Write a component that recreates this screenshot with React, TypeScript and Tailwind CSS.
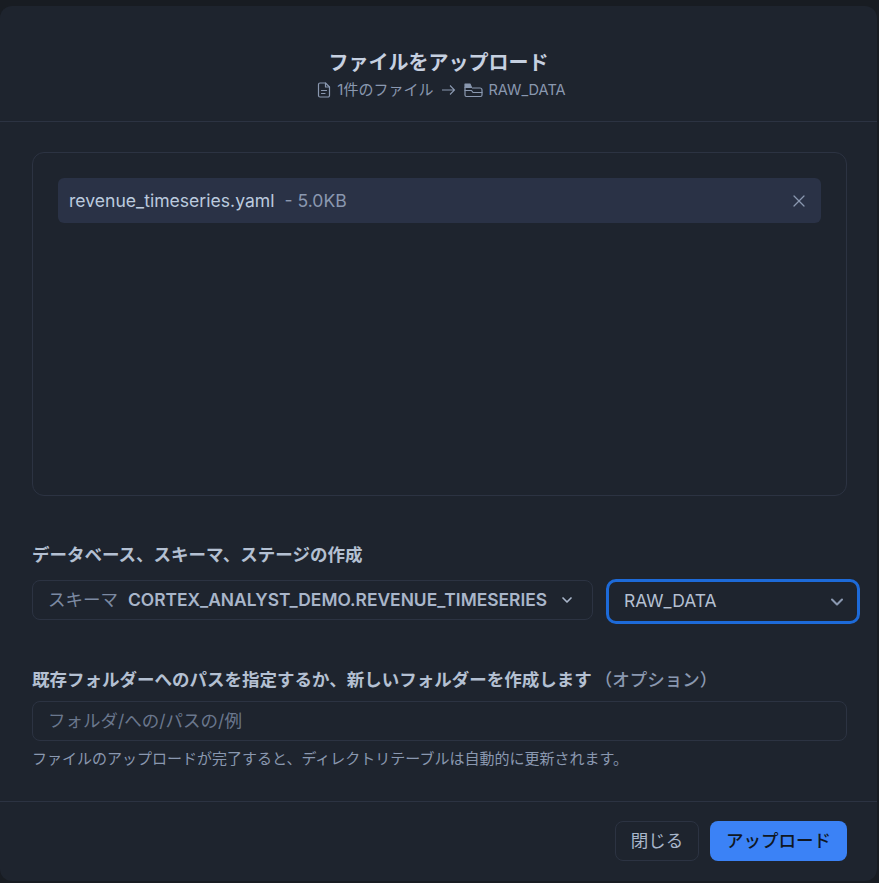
import { ChevronDown, X } from "lucide-react";

const font = "font-['Inter','Noto_Sans_CJK_JP',sans-serif]";

function FileIcon() {
    return (
        <svg width="14" height="16" viewBox="0 0 14 16" fill="none" stroke="currentColor" strokeWidth="1.2" strokeLinecap="round" strokeLinejoin="round">
            <path d="M8.5 1H3a1.5 1.5 0 0 0-1.5 1.5v11A1.5 1.5 0 0 0 3 15h8a1.5 1.5 0 0 0 1.5-1.5V5z" />
            <path d="M8.5 1v4h4" />
            <path d="M4.5 8.5h5M4.5 11.5h3.5" />
        </svg>
    );
}

function StageIcon() {
    return (
        <svg width="19" height="15" viewBox="0 0 19 15" fill="none" stroke="currentColor" strokeWidth="1.2" strokeLinecap="round" strokeLinejoin="round">
            <path d="M1 1h5l1.5 3.5H1z" fill="currentColor" />
            <path d="M1 4.5v7.5a1.5 1.5 0 0 0 1.5 1.5h14a1.5 1.5 0 0 0 1.5-1.5V7a2 2 0 0 0-2-2H8.5" />
            <path d="M1 7.5h6.5L9 9.5h9" />
        </svg>
    );
}

export default function App() {
    return (
        <div className={`h-[883px] w-[879px] overflow-hidden bg-[#181c22] pt-1.5 ${font}`}>
            <div className="flex h-[875px] w-[877px] flex-col rounded-xl bg-[#1e242e]">
                <header className="flex h-[116px] shrink-0 flex-col items-center border-b border-[#2c3342] pt-[43px]">
                    <h2 className="text-[20px] leading-7 font-semibold text-[#c6d0e0]">ファイルをアップロード</h2>
                    <div className="mt-[3px] flex items-center pl-[6px] text-[15px] leading-5 text-[#8a98b0]">
                        <FileIcon />
                        <span className="ml-[6px]">1件のファイル</span>
                        <svg className="mx-2" width="15" height="12" viewBox="0 0 15 12" fill="none" stroke="currentColor" strokeWidth="1.1">
                            <path d="M1 6h12.5M9 1.5 13.5 6 9 10.5" />
                        </svg>
                        <StageIcon />
                        <span className="ml-[5px] text-[14.6px]">RAW_DATA</span>
                    </div>
                </header>

                <div className="flex min-h-0 flex-1 flex-col pt-[30px] pr-[30px] pl-8">
                    <div className="h-[344px] rounded-xl border border-[#2c3342] p-[25px]">
                        <div className="flex h-[45px] items-center justify-between rounded-md bg-[#2a3246] pr-3 pl-[11px]">
                            <div className="pt-px text-[17.6px]">
                                <span className="text-[#bccbdf]">revenue_timeseries.yaml</span>
                                <span className="ml-2.5 text-[#8a98b0]">- 5.0KB</span>
                            </div>
                            <X size={20} strokeWidth={1.5} className="text-[#8a98b0]" />
                        </div>
                    </div>

                    <label className="mt-[46px] pt-px text-[17.5px] leading-6 font-semibold text-[#b4c0d2]">データベース、スキーマ、ステージの作成</label>
                    <div className="mt-3 flex items-start">
                        <div className="mt-px flex h-10 w-[561px] shrink-0 items-center rounded-lg border border-[#2c3342] pl-[15px] text-[17.5px]">
                            <span className="text-[#7c8aa2]">スキーマ</span>
                            <span className="ml-2.5 text-[17.4px] font-semibold whitespace-nowrap text-[#a9b6ca]">CORTEX_ANALYST_DEMO.REVENUE_TIMESERIES</span>
                            <ChevronDown size={16} strokeWidth={2.5} className="ml-3 shrink-0 text-[#a9b6ca]" />
                        </div>
                        <div className="ml-[13px] flex h-[45px] w-[254px] shrink-0 items-center justify-between rounded-[10px] border-[3px] border-[#1d6ad8] pr-2.5 pl-[15px] text-[17.5px] text-[#b4c0d2]">
                            <span>RAW_DATA</span>
                            <ChevronDown size={20} strokeWidth={2.5} className="text-[#8a98b0]" />
                        </div>
                    </div>

                    <label className="mt-[44px] text-[17.5px] leading-6 font-semibold whitespace-nowrap text-[#b4c0d2]">
                        既存フォルダーへのパスを指定するか、新しいフォルダーを作成します
                        <span className="ml-[3px] font-medium text-[#8a98b0]">（オプション）</span>
                    </label>
                    <div className="mt-[9px] flex h-10 items-center rounded-lg border border-[#2c3342] px-[15px] text-[17.5px] text-[#6a778d]">フォルダ/への/パスの/例</div>
                    <p className="mt-2 text-[15px] leading-5 text-[#8a98b0]">ファイルのアップロードが完了すると、ディレクトリテーブルは自動的に更新されます。</p>
                </div>

                <footer className="flex h-[80px] shrink-0 items-start justify-end gap-[11px] border-t border-[#2c3342] px-[30px] pt-[19px]">
                    <button className="flex h-10 w-[84px] items-center justify-center rounded-lg border border-[#2c3342] text-[17.5px] text-[#a9b6ca]">閉じる</button>
                    <button className="flex h-10 w-[137px] items-center justify-center rounded-lg bg-[#3b82f6] text-[17.5px] font-medium text-[#101722]">アップロード</button>
                </footer>
            </div>
        </div>
    );
}
